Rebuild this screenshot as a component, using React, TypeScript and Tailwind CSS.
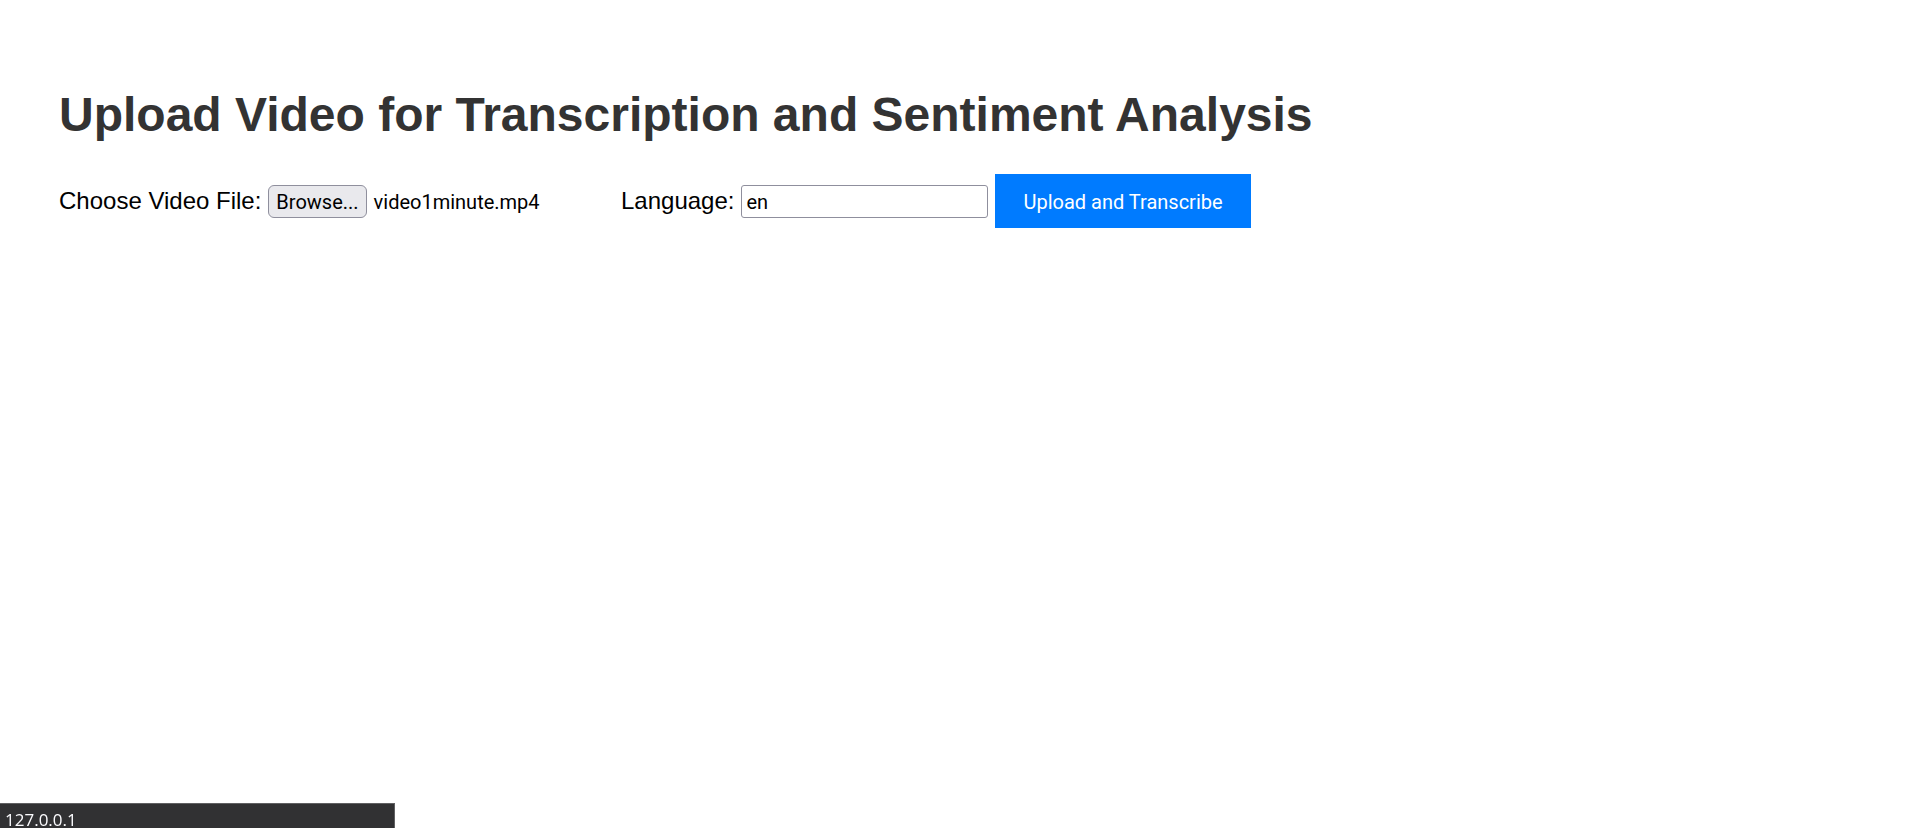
import { useRef, useState, type ChangeEvent, type FormEvent } from 'react';

export default function App() {
  const fileInput = useRef<HTMLInputElement>(null);
  const [fileName, setFileName] = useState('video1minute.mp4');
  const [language, setLanguage] = useState('en');

  const pickFile = (event: ChangeEvent<HTMLInputElement>) => {
    const file = event.target.files?.[0];
    if (file) setFileName(file.name);
  };

  const submit = (event: FormEvent) => event.preventDefault();

  return (
    <div className="min-h-screen bg-white font-['Liberation_Sans',Arial,sans-serif] text-2xl text-black">
      <main className="px-[59px] pt-[87px]">
        <h1 className="text-5xl leading-[55px] font-bold text-[#333333]">
          Upload Video for Transcription and Sentiment Analysis
        </h1>

        <form onSubmit={submit} className="mt-8 flex flex-wrap items-center gap-y-3">
          <div className="flex w-[562px] items-center">
            <label htmlFor="video">Choose Video File:</label>
            <input
              ref={fileInput}
              id="video"
              type="file"
              accept="video/*"
              onChange={pickFile}
              className="sr-only"
              tabIndex={-1}
            />
            <button
              type="button"
              onClick={() => fileInput.current?.click()}
              className="ml-[7px] h-[33px] rounded-md border border-[#8f8f9d] bg-[#e9e9ed] px-[7px] pt-0.5 font-[Roboto,sans-serif] text-xl leading-7"
            >
              Browse...
            </button>
            <span className="ml-[7px] pt-0.5 font-[Roboto,sans-serif] text-xl">{fileName}</span>
          </div>

          <label htmlFor="language">Language:</label>
          <input
            id="language"
            type="text"
            value={language}
            onChange={(event) => setLanguage(event.target.value)}
            className="ml-[7px] h-[33px] w-[247px] rounded-[3px] border border-[#8f8f9d] bg-white px-1 pt-0.5 font-[Roboto,sans-serif] text-xl"
          />
          <button
            type="submit"
            className="ml-[7px] h-[54px] bg-[#007bff] px-7 pt-0.5 font-[Roboto,sans-serif] text-xl text-white"
          >
            Upload and Transcribe
          </button>
        </form>
      </main>

      <div className="fixed bottom-0 left-0 h-[25px] w-[395px] border-t border-r border-[#606062] bg-[#313133] px-[5px] pt-1 font-['Open_Sans',sans-serif] text-[17px] leading-6 text-[#fbfbfe]">
        127.0.0.1
      </div>
    </div>
  );
}
